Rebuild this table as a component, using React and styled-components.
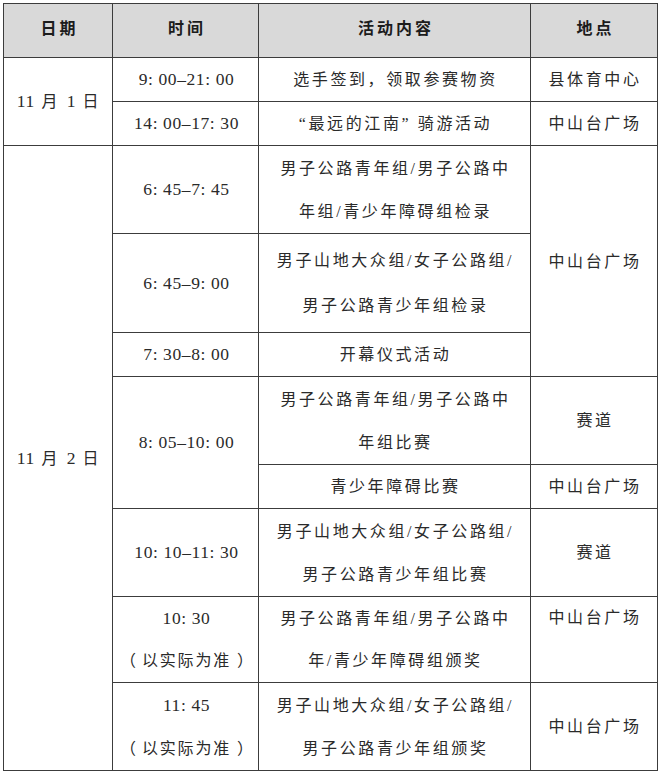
import React from "react";
import styled, { createGlobalStyle } from "styled-components";

const GlobalStyle = createGlobalStyle`
  html, body {
    margin: 0;
    padding: 0;
    background: #fff;
  }
  body {
    font-family: "Liberation Serif", "Noto Sans CJK SC", serif;
    color: #2a2a2a;
  }
`;

const Page = styled.div`
  padding: 3px 0 0 3px;
`;

const Table = styled.table`
  border-collapse: collapse;
  table-layout: fixed;
  width: 654px;
`;

const Row = styled.tr`
  height: ${(p) => p.h}px;
`;

const HeadCell = styled.th`
  background: #d9d9d9;
  border: 1px solid #3c3c3c;
  color: #1c1c1c;
  font-family: "Noto Sans CJK SC", sans-serif;
  font-size: 16px;
  font-weight: 700;
  letter-spacing: 3px;
  line-height: 20px;
  padding: 0 0 8px 3px;
  text-align: center;
  vertical-align: middle;
`;

const Cell = styled.td`
  border: 1px solid #3c3c3c;
  padding: 0 0 0 2px;
  font-size: 16px;
  letter-spacing: 2.6px;
  line-height: ${(p) => p.lh || 43}px;
  text-align: center;
  vertical-align: ${(p) => (p.top ? "top" : "middle")};
`;

const Time = styled.span`
  font-family: "Liberation Serif", serif;
  font-size: 17.5px;
  letter-spacing: 0.6px;
`;

const Note = styled.span`
  letter-spacing: 1.8px;
`;

const Paren = styled.span`
  display: inline-block;
  margin: 0 ${(p) => (p.open ? "6px 0 0" : "0 0 6px")};
  letter-spacing: 0;
`;

const Lines = ({ items }) =>
  items.map((t, i) => (
    <React.Fragment key={i}>
      {i > 0 && <br />}
      {t}
    </React.Fragment>
  ));

const Actual = () => (
  <Note>
    <Paren open>（</Paren>以实际为准<Paren>）</Paren>
  </Note>
);

const App = () => (
  <>
    <GlobalStyle />
    <Page>
      <Table>
        <colgroup>
          <col style={{ width: 109 }} />
          <col style={{ width: 146 }} />
          <col style={{ width: 272 }} />
          <col style={{ width: 127 }} />
        </colgroup>
        <thead>
          <Row h={54}>
            <HeadCell>日期</HeadCell>
            <HeadCell>时间</HeadCell>
            <HeadCell>活动内容</HeadCell>
            <HeadCell>地点</HeadCell>
          </Row>
        </thead>
        <tbody>
          <Row h={44}>
            <Cell rowSpan={2}>
              <Time>11</Time> 月 <Time>1</Time> 日
            </Cell>
            <Cell>
              <Time>9: 00–21: 00</Time>
            </Cell>
            <Cell>选手签到，领取参赛物资</Cell>
            <Cell>县体育中心</Cell>
          </Row>
          <Row h={44}>
            <Cell>
              <Time>14: 00–17: 30</Time>
            </Cell>
            <Cell>“最远的江南” 骑游活动</Cell>
            <Cell>中山台广场</Cell>
          </Row>
          <Row h={88}>
            <Cell rowSpan={9}>
              <Time>11</Time> 月 <Time>2</Time> 日
            </Cell>
            <Cell>
              <Time>6: 45–7: 45</Time>
            </Cell>
            <Cell>
              <Lines items={["男子公路青年组/男子公路中", "年组/青少年障碍组检录"]} />
            </Cell>
            <Cell rowSpan={3}>中山台广场</Cell>
          </Row>
          <Row h={99}>
            <Cell>
              <Time>6: 45–9: 00</Time>
            </Cell>
            <Cell lh={45}>
              <Lines items={["男子山地大众组/女子公路组/", "男子公路青少年组检录"]} />
            </Cell>
          </Row>
          <Row h={44}>
            <Cell>
              <Time>7: 30–8: 00</Time>
            </Cell>
            <Cell>开幕仪式活动</Cell>
          </Row>
          <Row h={88}>
            <Cell rowSpan={2}>
              <Time>8: 05–10: 00</Time>
            </Cell>
            <Cell>
              <Lines items={["男子公路青年组/男子公路中", "年组比赛"]} />
            </Cell>
            <Cell>赛道</Cell>
          </Row>
          <Row h={44}>
            <Cell>青少年障碍比赛</Cell>
            <Cell>中山台广场</Cell>
          </Row>
          <Row h={88}>
            <Cell>
              <Time>10: 10–11: 30</Time>
            </Cell>
            <Cell>
              <Lines items={["男子山地大众组/女子公路组/", "男子公路青少年组比赛"]} />
            </Cell>
            <Cell>赛道</Cell>
          </Row>
          <Row h={86}>
            <Cell lh={42}>
              <Time>10: 30</Time>
              <br />
              <Actual />
            </Cell>
            <Cell lh={42}>
              <Lines items={["男子公路青年组/男子公路中", "年/青少年障碍组颁奖"]} />
            </Cell>
            <Cell lh={42} top>
              中山台广场
            </Cell>
          </Row>
          <Row h={88}>
            <Cell>
              <Time>11: 45</Time>
              <br />
              <Actual />
            </Cell>
            <Cell>
              <Lines items={["男子山地大众组/女子公路组/", "男子公路青少年组颁奖"]} />
            </Cell>
            <Cell>中山台广场</Cell>
          </Row>
        </tbody>
      </Table>
    </Page>
  </>
);

export default App;
